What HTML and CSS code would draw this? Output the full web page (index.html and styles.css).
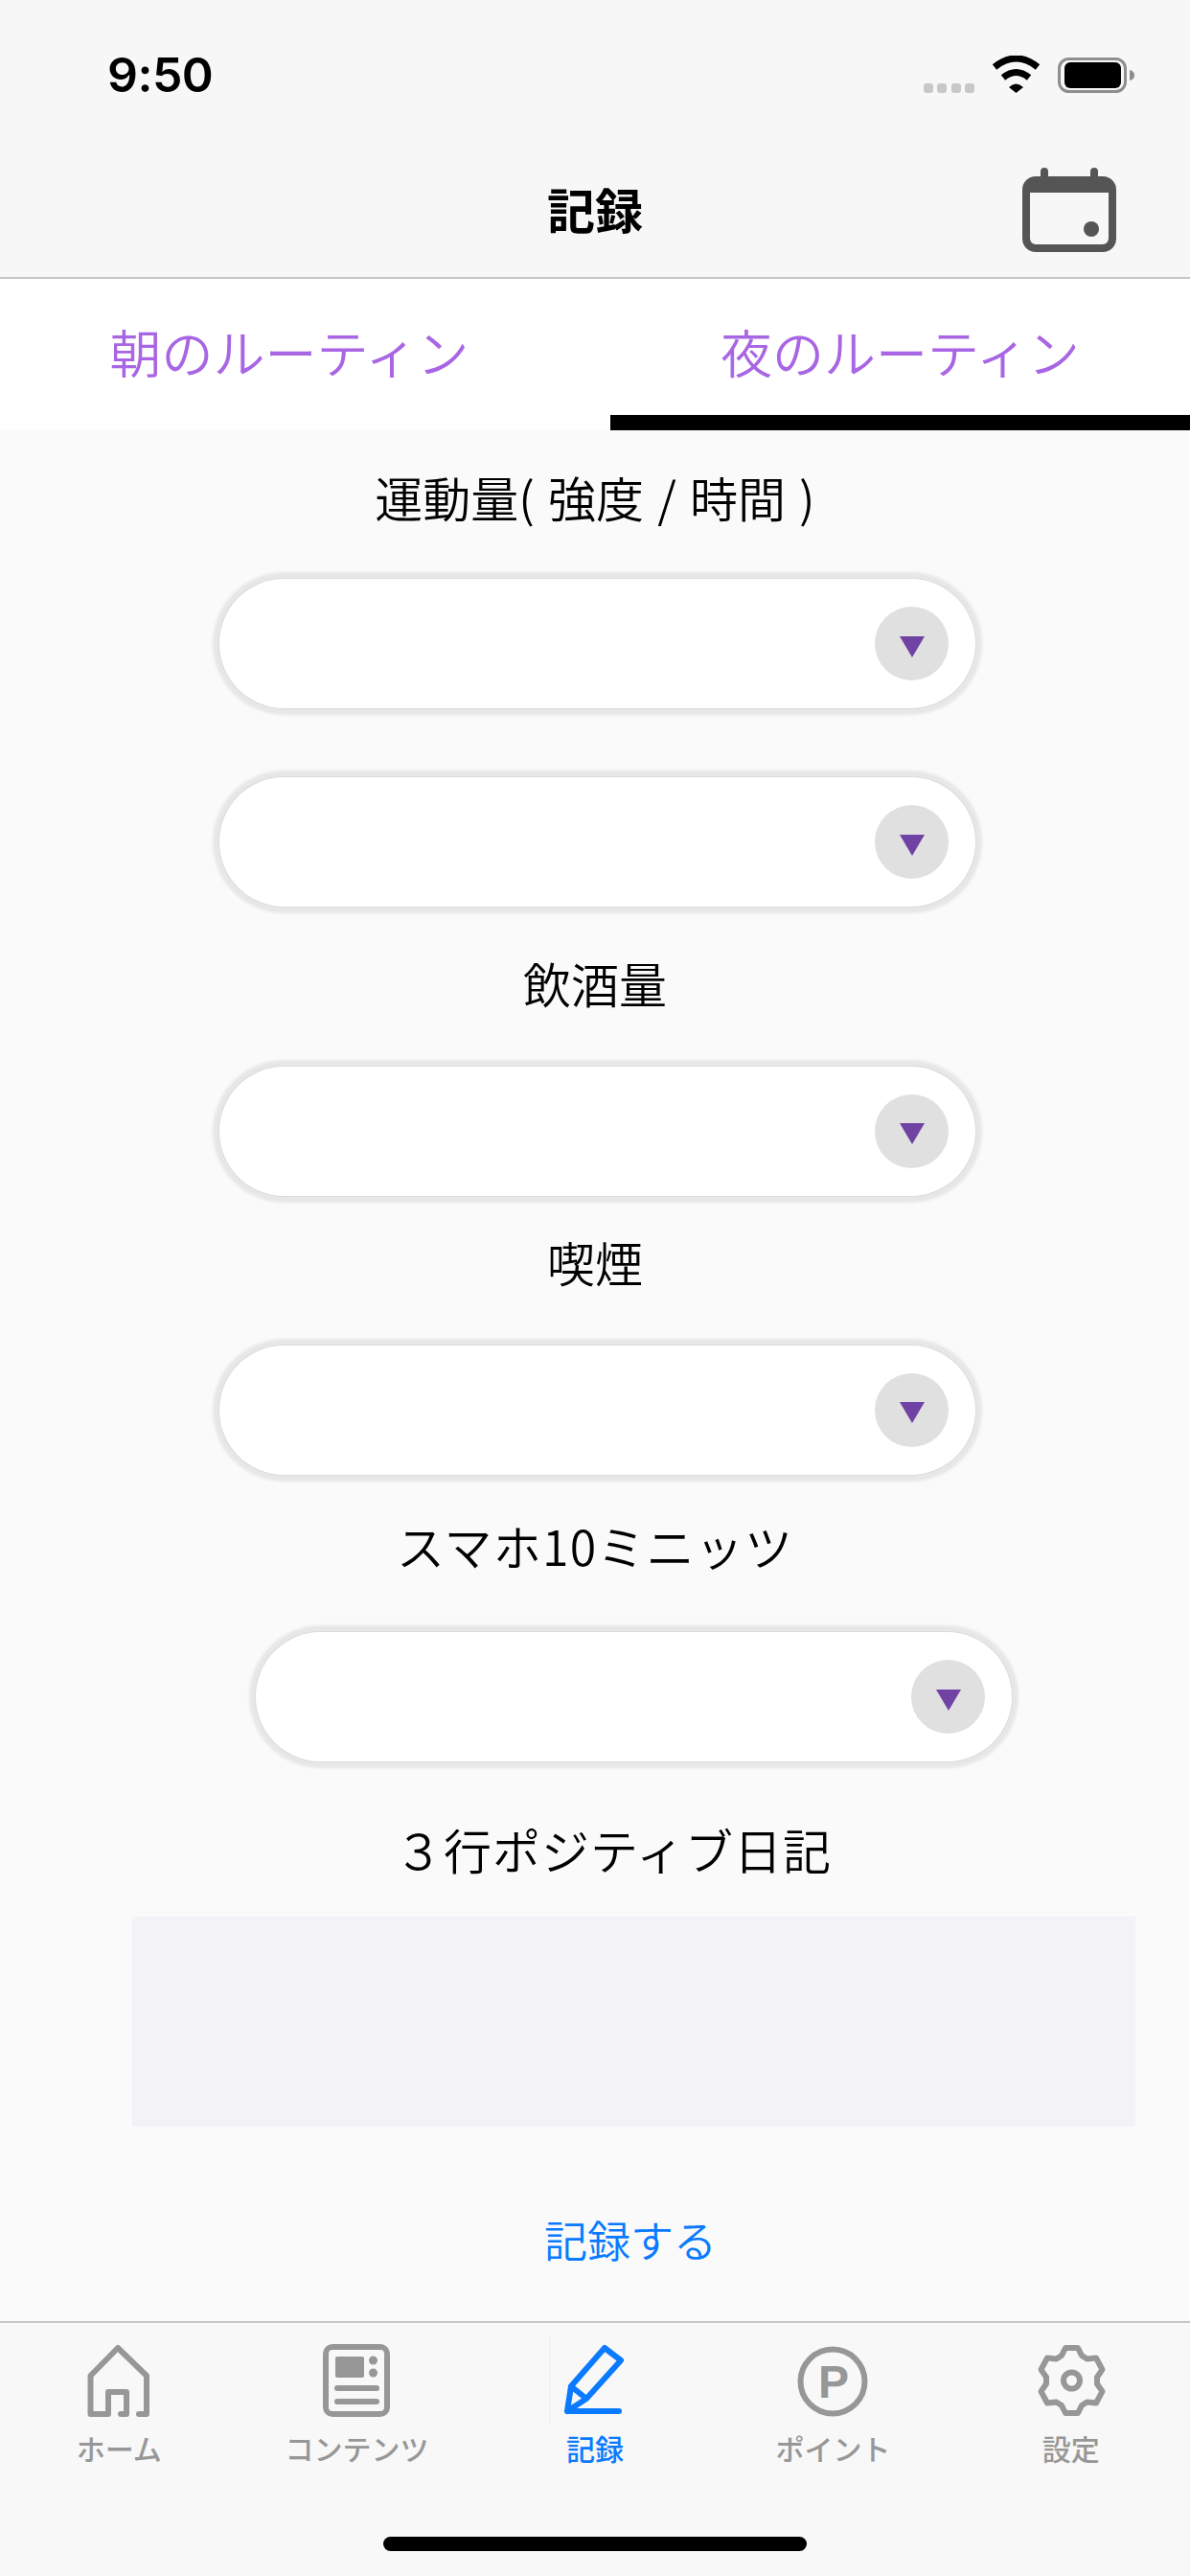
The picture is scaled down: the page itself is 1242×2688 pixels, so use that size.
FILE: index.html
```html
<!DOCTYPE html>
<html lang="ja">
<head>
<meta charset="utf-8">
<title>記録</title>
<link rel="stylesheet" href="styles.css">
</head>
<body>
<div class="app">
  <header class="top">
    <div class="status">
      <span class="time">9:50</span>
      <div class="status-icons">
        <div class="signal"><i></i><i></i><i></i><i></i></div>
        <svg class="wifi" width="51" height="39" viewBox="0 0 51 39"><path d="M3 12Q25.500-6 48 12M12 23Q25.500 12 39 23" fill="none" stroke="#000" stroke-width="7"/><path d="M18 33Q25.500 26 33 33L25.500 39Z" fill="#000"/></svg>
        <svg class="battery" width="80" height="37" viewBox="0 0 80 37"><rect x="1.500" y="1.500" width="69" height="34" rx="10" fill="none" stroke="#8e8e8e" stroke-width="3"/><rect x="7" y="5" width="59" height="27" rx="6" fill="#000"/><path d="M75 13Q80 14 80 18.500Q80 23 75 24Z" fill="#8e8e8e"/></svg>
      </div>
    </div>
    <div class="nav">
      <h1 class="nav-title">記録</h1>
      <svg class="calendar" width="98" height="88" viewBox="0 0 98 88"><rect x="19" y="0" width="8" height="14" rx="4" fill="#555"/><rect x="71" y="0" width="8" height="14" rx="4" fill="#555"/><path d="M14 9H84A14 14 0 0 1 98 23V74A14 14 0 0 1 84 88H14A14 14 0 0 1 0 74V23A14 14 0 0 1 14 9ZM8 26V74A6 6 0 0 0 14 80H84A6 6 0 0 0 90 74V26Z" fill="#555" fill-rule="evenodd"/><circle cx="72" cy="64" r="8" fill="#555"/></svg>
    </div>
  </header>

  <nav class="tabs">
    <div class="tab tab-first">朝のルーティン</div>
    <div class="tab tab-active">夜のルーティン</div>
  </nav>

  <main class="form">
    <p class="label label-exercise">運動量( 強度 / 時間 )</p>
    <div class="select select-a"><span class="select-btn"><i class="caret"></i></span></div>
    <div class="select select-b"><span class="select-btn"><i class="caret"></i></span></div>
    <p class="label label-drink">飲酒量</p>
    <div class="select select-c"><span class="select-btn"><i class="caret"></i></span></div>
    <p class="label label-smoke">喫煙</p>
    <div class="select select-d"><span class="select-btn"><i class="caret"></i></span></div>
    <p class="label label-phone">スマホ10ミニッツ</p>
    <div class="select select-e"><span class="select-btn"><i class="caret"></i></span></div>
    <p class="label label-diary">３行ポジティブ日記</p>
    <div class="diary"></div>
    <p class="save">記録する</p>
  </main>

  <footer class="tabbar">
    <div class="tabbar-items">
      <div class="tabbar-item">
        <svg width="84" height="84" viewBox="0 0 84 84"><path d="M63 77H71V37L41 8L12.500 37V77H31V54H50V77H44" fill="none" stroke="#979797" stroke-width="6" stroke-linecap="round" stroke-linejoin="round"/></svg>
        <span>ホーム</span>
      </div>
      <div class="tabbar-item">
        <svg width="84" height="84" viewBox="0 0 84 84"><rect x="9" y="7" width="64" height="70" rx="7" fill="none" stroke="#979797" stroke-width="6"/><rect x="19" y="17" width="30" height="22" rx="2" fill="#979797"/><circle cx="58.500" cy="21" r="4.500" fill="#979797"/><circle cx="58.500" cy="34" r="4.500" fill="#979797"/><path d="M21 50H62M21 64H62" stroke="#979797" stroke-width="6" stroke-linecap="round"/></svg>
        <span>コンテンツ</span>
      </div>
      <div class="tabbar-item tabbar-current">
        <svg width="84" height="84" viewBox="0 0 84 84"><path d="M17 48L52 8L69 21L33 61ZM17 48L13 74H67M13 74L33 61" fill="none" stroke="#0a7aff" stroke-width="6" stroke-linecap="round" stroke-linejoin="round"/></svg>
        <span>記録</span>
      </div>
      <div class="tabbar-item">
        <svg width="84" height="84" viewBox="0 0 84 84"><circle cx="42" cy="43" r="33.500" fill="none" stroke="#979797" stroke-width="6"/><text class="p-mark" x="43" y="60" text-anchor="middle">P</text></svg>
        <span>ポイント</span>
      </div>
      <div class="tabbar-item">
        <svg width="84" height="84" viewBox="0 0 84 84"><path d="M32 16L36 8H49L53 16L58.500 19.500L68 18.500L74.500 30.600L69 38.500V45.500L74.500 53.400L68 65.500L58.500 64.500L53 68L49 76H36L32 68L26.500 64.500L17 65.500L10.500 53.400L16 45.500V38.500L10.500 30.600L17 18.500L26.500 19.500Z" fill="none" stroke="#979797" stroke-width="6" stroke-linejoin="round"/><circle cx="42.500" cy="42" r="8.500" fill="none" stroke="#979797" stroke-width="6"/></svg>
        <span>設定</span>
      </div>
    </div>
    <div class="home-indicator"></div>
  </footer>
</div>
</body>
</html>
```
FILE: styles.css
```css
* { box-sizing: border-box; }
html, body { margin: 0; padding: 0; }
body {
  width: 1242px;
  height: 2688px;
  overflow: hidden;
  background: #fafafa;
  font-family: "Noto Sans CJK JP", "Noto Sans", sans-serif;
  color: #000;
}
.app { display: flex; flex-direction: column; height: 2688px; }

/* Header */
.top { background: #f7f7f7; border-bottom: 2px solid #c6c6c6; height: 291px; }
.status {
  display: flex;
  justify-content: space-between;
  align-items: flex-end;
  height: 132px;
  padding: 60px 58px 35px 112px;
}
.time {
  font-family: Inter, "Liberation Sans", sans-serif;
  font-size: 50px;
  font-weight: 600;
  line-height: 37px;
  letter-spacing: -0.5px;
}
.status-icons { display: flex; align-items: flex-end; gap: 18px; }
.signal { display: flex; gap: 4.500px; }
.signal i { width: 10px; height: 10px; border-radius: 3px; background: #c8c8c8; }
.wifi, .battery { display: block; }
.nav {
  display: flex;
  justify-content: center;
  align-items: center;
  position: relative;
  height: 157px;
  padding-top: 12px;
}
.nav-title { margin: 0; font-size: 50px; line-height: 60px; font-weight: 700; }
.calendar { position: absolute; right: 77px; top: 43px; }

/* Segments */
.tabs { display: grid; grid-template-columns: 637px 605px; background: #fff; height: 158px; }
.tab {
  display: flex;
  justify-content: center;
  align-items: center;
  padding-top: 10px;
  border-bottom: 16px solid transparent;
  color: #a866e4;
  font-size: 54px;
  line-height: 64px;
  font-weight: 350;
}
.tab-first { padding-right: 33px; }
.tab-active { border-bottom-color: #000; }

/* Form */
.form { flex: 1; min-height: 0; display: flex; flex-direction: column; }
.label { margin: 0; height: 60px; font-size: 50px; line-height: 60px; font-weight: 350; text-align: center; }
.label-exercise { margin-top: 39px; word-spacing: 3px; }
.label-drink { margin-top: 50px; }
.label-smoke { margin-top: 39.500px; }
.label-phone { margin-top: 44.500px; letter-spacing: 1.200px; }
.label-diary { margin-top: 62px; padding-left: 38px; letter-spacing: 1px; }

.select {
  display: flex;
  justify-content: flex-end;
  align-items: center;
  flex: none;
  width: 787px;
  height: 133px;
  margin-left: 230px;
  padding: 0 27px 0 0;
  background: #fff;
  border-radius: 67px;
  box-shadow: 0 0 0 1px #fff, 0 0 0 2px #dcdcdc, 0 0 3px 8px #e7e7e7;
}
.select-a { margin-top: 57px; }
.select-b { margin-top: 74px; }
.select-c { margin-top: 58.500px; }
.select-d { margin-top: 58.500px; }
.select-e { margin-top: 62px; margin-left: 268px; }
.select-btn {
  display: flex;
  justify-content: center;
  align-items: center;
  width: 77px;
  height: 77px;
  border-radius: 50%;
  background: #e0e0e0;
}
.caret {
  width: 0;
  height: 0;
  margin-top: 6px;
  border-left: 13px solid transparent;
  border-right: 13px solid transparent;
  border-top: 22px solid #6f42a4;
}
.diary { flex: none; width: 1047px; height: 219px; margin: 41px 0 0 138px; background: #f2f2f7; }
.save {
  margin: 88px 0 0;
  padding-left: 74px;
  height: 60px;
  font-size: 45px;
  line-height: 60px;
  font-weight: 350;
  text-align: center;
  color: #0a7aff;
}

/* Bottom tab bar */
.tabbar { height: 266px; flex: none; background: #f8f8f8; border-top: 2px solid #c6c6c6; padding-top: 18px; }
.tabbar-items { display: grid; grid-template-columns: repeat(5, 1fr); }
.tabbar-item {
  position: relative;
  display: flex;
  flex-direction: column;
  align-items: center;
  gap: 13px;
  color: #979797;
  font-size: 30px;
  line-height: 30px;
  font-weight: 500;
}
.tabbar-item svg { display: block; }
.tabbar-current { color: #0a7aff; }
.tabbar-current::before {
  content: "";
  position: absolute;
  left: 76px;
  top: -5px;
  width: 2px;
  height: 94px;
  background: #f2f2f2;
}
.p-mark { font-family: "Liberation Sans", sans-serif; font-weight: 700; font-size: 48px; fill: #979797; }
.home-indicator { width: 442px; height: 15px; margin: 78px auto 0; border-radius: 8px; background: #000; }
```
